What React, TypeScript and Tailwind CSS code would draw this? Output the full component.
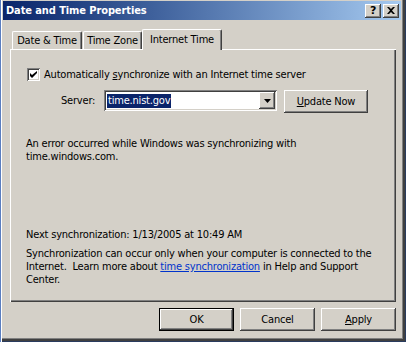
import React from "react";

const raised =
  "bg-[#d4d0c8] shadow-[inset_-1px_-1px_#404040,inset_1px_1px_#ffffff,inset_-2px_-2px_#808080,inset_2px_2px_#d4d0c8]";
const sunken =
  "shadow-[inset_1px_1px_#808080,inset_-1px_-1px_#ffffff,inset_2px_2px_#404040,inset_-2px_-2px_#d4d0c8]";

function Btn({ children, def = false, w = "w-[75px]" }: { children: React.ReactNode; def?: boolean; w?: string }) {
  if (def) {
    return (
      <div className={`${w} h-[23px] border border-black flex`}>
        <div className={`flex-1 flex items-center justify-center ${raised}`}>{children}</div>
      </div>
    );
  }
  return <div className={`${w} h-[23px] flex items-center justify-center ${raised}`}>{children}</div>;
}

export default function App() {
  return (
    <div
      className="w-[406px] h-[342px] overflow-hidden bg-[#d4d0c8] flex flex-col text-[11px] leading-[13px] tracking-[-0.2px] text-black shadow-[inset_1px_0_#5a7ec0,inset_2px_0_#ffffff,inset_-1px_-1px_#2a3c5e,inset_-3px_-3px_#404040,inset_-4px_-4px_#808080]"
      style={{ fontFamily: "'DejaVu Sans Condensed', 'DejaVu Sans', sans-serif" }}
    >
      {/* Title bar */}
      <div className="ml-[3px] mr-[5px] mt-[1px] h-[19px] flex items-center bg-gradient-to-r from-[#0a246a] to-[#a6caf0] shrink-0">
        <span className="ml-[3px] text-white font-bold text-[11px] tracking-[-0.1px]">Date and Time Properties</span>
        <div className="ml-auto flex items-center gap-[2px] mr-[2px]">
          <div className={`w-[16px] h-[14px] flex items-center justify-center ${raised}`}>
            <span className="font-bold text-[11px] leading-none text-black" style={{ fontFamily: "'DejaVu Sans', sans-serif" }}>?</span>
          </div>
          <div className={`w-[16px] h-[14px] flex items-center justify-center ${raised}`}>
            <svg width="8" height="7" viewBox="0 0 8 7">
              <path d="M0 0h2l2 2 2-2h2L5 3.5 8 7H6L4 5 2 7H0l3-3.5z" fill="#000" />
            </svg>
          </div>
        </div>
      </div>

      {/* Tabs + panel */}
      <div className="ml-[10px] w-[386px] mt-[9px] flex flex-col shrink-0">
        <div className="h-[20px] flex items-end pl-[2px]">
          <div className="w-[70px] h-[18px] flex items-center justify-center border-l border-t border-white rounded-tl-[2px] shadow-[inset_-1px_0_#808080] border-r border-r-[#404040] rounded-tr-[2px]">
            Date &amp; Time
          </div>
          <div className="w-[59px] h-[18px] flex items-center justify-center border-l border-t border-white rounded-tl-[2px] shadow-[inset_-1px_0_#808080] border-r border-r-[#404040] rounded-tr-[2px] ml-[1px]">
            Time Zone
          </div>
          <div className="relative z-10 -mb-[1px] w-[80px] h-[21px] flex items-start justify-center pt-[3px] bg-[#d4d0c8] border-l border-t border-white rounded-tl-[2px] shadow-[inset_-1px_0_#808080] border-r border-r-[#404040] rounded-tr-[2px]">
            Internet Time
          </div>
        </div>
        <div className="h-[253px] border-t border-l border-white shadow-[inset_-1px_-1px_#404040,inset_-2px_-2px_#808080] flex flex-col pl-[16px]">
          {/* checkbox row */}
          <div className="mt-[18px] h-[13px] flex items-center">
            <div className={`w-[13px] h-[13px] bg-white ${sunken} flex items-center justify-center`}>
              <svg width="7" height="7" viewBox="0 0 7 7">
                <path d="M0 2v3l2 2 5-5V-0L2 4z" fill="#000" />
              </svg>
            </div>
            <span className="ml-[4px]">
              Automatically <span className="underline">s</span>ynchronize with an Internet time server
            </span>
          </div>
          {/* server row */}
          <div className="mt-[9px] h-[23px] flex items-start">
            <span className="ml-[34px] mt-[4px] w-[43px]">Server:</span>
            <div className={`w-[173px] h-[21px] bg-white ${sunken} flex items-center pl-[3px] pr-[2px]`}>
              <span className="bg-[#0a246a] text-white px-[1px] leading-[14px]">time.nist.gov</span>
              <div className={`ml-auto w-[16px] h-[17px] flex items-center justify-center ${raised}`}>
                <svg width="7" height="4" viewBox="0 0 7 4">
                  <path d="M0 0h7L3.5 4z" fill="#000" />
                </svg>
              </div>
            </div>
            <div className="ml-[7px]">
              <Btn w="w-[84px]">
                <span>
                  <span className="underline">U</span>pdate Now
                </span>
              </Btn>
            </div>
          </div>
          {/* error */}
          <div className="mt-[24px] ml-[-1px]">
            <div>An error occurred while Windows was synchronizing with</div>
            <div>time.windows.com.</div>
          </div>
          <div className="mt-[65px] ml-[-1px]">Next synchronization: 1/13/2005 at 10:49 AM</div>
          <div className="mt-[6px] ml-[-1px] w-[350px]">
            <div>Synchronization can occur only when your computer is connected to the</div>
            <div>
              Internet.&nbsp; Learn more about <span className="text-[#0033cc] underline">time synchronization</span> in Help and Support
            </div>
            <div>Center.</div>
          </div>
        </div>
        {/* buttons */}
        <div className="mt-[6px] flex justify-end gap-[6px]">
          <Btn def>OK</Btn>
          <Btn>Cancel</Btn>
          <Btn>
            <span>
              <span className="underline">A</span>pply
            </span>
          </Btn>
        </div>
      </div>
    </div>
  );
}
